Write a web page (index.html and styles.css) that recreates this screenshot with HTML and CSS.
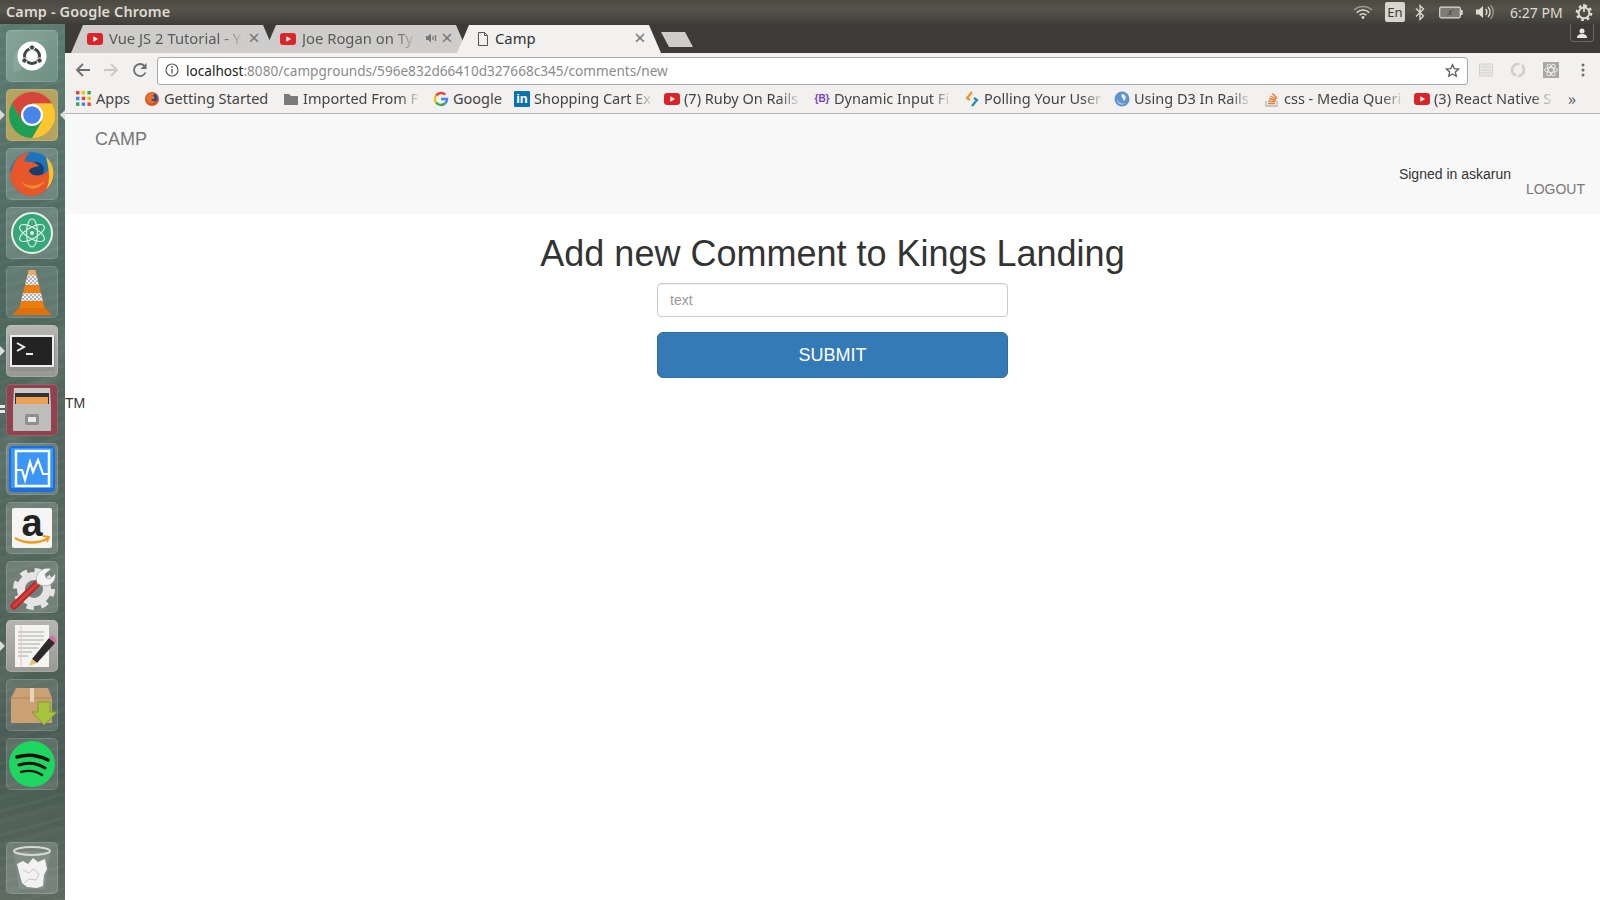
FILE: index.html
```html
<!DOCTYPE html>
<html lang="en">
<head>
<meta charset="utf-8">
<title>Camp</title>
<link rel="stylesheet" href="styles.css">
</head>
<body>
<svg class="defs" width="0" height="0" aria-hidden="true">
  <defs>
    <symbol id="yt" viewBox="0 0 16 16"><rect x="0" y="2" width="16" height="12" rx="3" fill="#d9252a"/><path d="M6.400 5.300 11 8l-4.600 2.700z" fill="#fff"/></symbol>
    <pattern id="check" width="4" height="4" patternUnits="userSpaceOnUse"><rect width="4" height="4" fill="#eeeeee"/><rect width="2" height="2" fill="#b4b4b4"/><rect x="2" y="2" width="2" height="2" fill="#b4b4b4"/></pattern>
  </defs>
</svg>
<header class="topbar">
  <div class="win-title">Camp - Google Chrome</div>
  <div class="status">
    <svg class="st-wifi" width="20" height="14" viewBox="0 0 20 14"><g fill="none" stroke="#dfdbd2" stroke-width="1.500"><path d="M1 5a13 13 0 0 1 18 0" opacity=".55"/><path d="M3.800 7.600a9 9 0 0 1 12.400 0"/><path d="M6.600 10.200a5 5 0 0 1 6.800 0"/></g><circle cx="10" cy="12.500" r="1.400" fill="#dfdbd2"/></svg>
    <div class="st-en">En</div>
    <svg class="st-bt" width="10" height="17" viewBox="0 0 10 17"><path d="M1 4.500 8.500 12 5 15.500v-14L8.500 5 1 12.500" fill="none" stroke="#dfdbd2" stroke-width="1.300"/></svg>
    <svg class="st-bat" width="24" height="13" viewBox="0 0 24 13"><rect x=".7" y="1.200" width="20.600" height="10.600" rx="1.500" fill="#7d7b74" stroke="#dfdbd2" stroke-width="1.200"/><rect x="21.600" y="4" width="2" height="5" fill="#dfdbd2"/><path d="M15 3 9.500 6.300l3 .6L7 10l6.500-2.400-3-.7z" fill="#2f2e2a"/></svg>
    <svg class="st-vol" width="20" height="16" viewBox="0 0 20 16"><path d="M1 5.500h3L8 2v12l-4-3.500H1z" fill="#dfdbd2"/><g fill="none" stroke="#dfdbd2" stroke-width="1.400"><path d="M10.500 5a4 4 0 0 1 0 6"/><path d="M13 3a7 7 0 0 1 0 10"/><path d="M15.500 1a10 10 0 0 1 0 14" opacity=".5"/></g></svg>
    <div class="st-time">6:27 PM</div>
    <svg class="st-gear" width="18" height="18" viewBox="0 0 20 20"><circle cx="10" cy="11" r="6" fill="none" stroke="#dfdbd2" stroke-width="2.200"/><circle cx="10" cy="11" r="8" fill="none" stroke="#dfdbd2" stroke-width="2.600" stroke-dasharray="3 3.300"/><rect x="9" y="1" width="2" height="9" fill="#dfdbd2"/></svg>
  </div>
</header>
<div class="shell">
  <nav class="launcher">
    <div class="tile tile-ubuntu"><svg viewBox="0 0 52 52"><path d="M8 42C2 24 18 6 40 10c-14 0-26 14-24 30z" fill="#fff" opacity=".1"/><circle cx="26" cy="26" r="14.500" fill="#fff"/><circle cx="26" cy="26" r="7.500" fill="none" stroke="#3f4a44" stroke-width="3"/><circle cx="26" cy="17.500" r="2.700" fill="#3f4a44" stroke="#fff"/><circle cx="18.500" cy="30.500" r="2.700" fill="#3f4a44" stroke="#fff"/><circle cx="33.500" cy="30.500" r="2.700" fill="#3f4a44" stroke="#fff"/></svg></div>
    <div class="tile tile-chrome pip pip-both"><svg viewBox="0 0 52 52"><path d="M45.900 14.500A23 23 0 0 0 6.100 14.500L16 31.800 26 14.500z" fill="#d8453c"/><path d="M45.900 14.500A23 23 0 0 1 26 49L36 31.800 26 14.500z" fill="#fbc62f"/><path d="M6.100 14.500A23 23 0 0 0 26 49L36 31.800H16z" fill="#1f9e55"/><circle cx="26" cy="26" r="11" fill="#fff"/><circle cx="26" cy="26" r="8.800" fill="#4a86e8"/></svg></div>
    <div class="tile"><svg viewBox="0 0 52 52"><circle cx="26" cy="26" r="22" fill="#1d74bd"/><circle cx="30" cy="22" r="8" fill="#17406f"/><path d="M6 22C8 10 16 5 24 5c-4 3-6 6-5 9 5-1 11 0 14 4-5 1-9 2-10 5 3 6 12 6 19 0 2-4 1-10-2-14 6 5 9 13 7 21-3 12-13 18-21 18C14 48 4 38 4 26c0-2 1-3 2-4z" fill="#e6572a"/><path d="M40 9c6 5 9 13 7 21-1 5-4 9-7 12 4-8 4-18 0-33z" fill="#f8c12e"/><path d="M15 33c6 6 15 6 24 0-5 9-18 11-24 0z" fill="#f08a2b"/></svg></div>
    <div class="tile"><svg viewBox="0 0 52 52"><circle cx="26" cy="26" r="20" fill="#35a877" stroke="#e9f1ec" stroke-width="2"/><g fill="none" stroke="#dff0e6" stroke-width="1.200"><ellipse cx="26" cy="26" rx="14" ry="5.500" transform="rotate(30 26 26)"/><ellipse cx="26" cy="26" rx="14" ry="5.500" transform="rotate(90 26 26)"/><ellipse cx="26" cy="26" rx="14" ry="5.500" transform="rotate(150 26 26)"/></g><circle cx="26" cy="26" r="2" fill="#e8f3ec"/></svg></div>
    <div class="tile tile-dim"><svg viewBox="0 0 52 52"><path d="M22.500 4h7l1 5h-9z" fill="#f3a868"/><path d="M21.500 9h9l2.500 10H19z" fill="url(#check)"/><path d="M19 19h14l2 8H17z" fill="#ee7d10"/><path d="M17 27h18l2 8H15z" fill="url(#check)"/><path d="M15 35h22l2 9H13z" fill="#ee7d10"/><path d="M13 42h26l7 7H6z" fill="#e2700a"/></svg></div>
    <div class="tile tile-light pip pip-left"><svg viewBox="0 0 52 52"><rect x="3" y="10" width="46" height="36" rx="2" fill="#8f8f8f"/><rect x="4" y="10" width="44" height="32" fill="#ededed"/><rect x="6" y="12" width="40" height="28" fill="#232323"/><path d="M11 18l7 4-7 4" fill="none" stroke="#eee" stroke-width="2"/><path d="M20 29h7" stroke="#eee" stroke-width="2"/></svg></div>
    <div class="tile tile-files pip pip-double"><svg viewBox="0 0 52 52"><path d="M8 4h36l1 20H7z" fill="#c9c9c9"/><rect x="9" y="9" width="34" height="13" fill="#333"/><rect x="10" y="13" width="32" height="7" fill="#ef9e52"/><path d="M7 20h38v27H7z" fill="#bdbdbb"/><rect x="19" y="30" width="14" height="11" rx="2" fill="#8f8f8d"/><rect x="22" y="33" width="8" height="5" fill="#e9e9e9"/></svg></div>
    <div class="tile"><svg viewBox="0 0 52 52"><rect x="3" y="3" width="46" height="46" rx="4" fill="#1c6fe0"/><rect x="5" y="5" width="42" height="40" fill="#3a96fb"/><rect x="10" y="8" width="33" height="35" fill="none" stroke="#fff" stroke-width="2.500"/><path d="M10 27h6l3 10 5-18 3 10 5-12 5 14h7" fill="none" stroke="#fff" stroke-width="2.200"/></svg></div>
    <div class="tile"><svg viewBox="0 0 52 52"><rect x="6" y="6" width="40" height="40" rx="2" fill="#f5f5f5"/><text class="amz" x="26" y="34" text-anchor="middle">a</text><path d="M9 36c10 6 24 6 33 0" fill="none" stroke="#f09a17" stroke-width="2.400"/><path d="M37 34l6 1-2 5" fill="none" stroke="#f09a17" stroke-width="1.800"/></svg></div>
    <div class="tile"><svg viewBox="0 0 52 52"><circle cx="28" cy="28" r="13" fill="none" stroke="#e4e4e4" stroke-width="8"/><circle cx="28" cy="28" r="18" fill="none" stroke="#e4e4e4" stroke-width="6" stroke-dasharray="7 7.140"/><path d="M8 45 34 20" stroke="#b92a28" stroke-width="7" stroke-linecap="round"/><path d="M8 45 34 20" stroke="#d6403a" stroke-width="3" stroke-linecap="round"/><path d="M31 22c-3-9 6-17 14-14l-6 5 1 4 4 1 5-5c2 9-9 16-18 9z" fill="#f4f4f4" stroke="#9a9a9a" stroke-width=".6"/></svg></div>
    <div class="tile tile-light pip pip-left"><svg viewBox="0 0 52 52"><rect x="9" y="5" width="34" height="42" fill="#f4f4f1"/><path d="M12 12h26M12 16h26M12 20h26M12 24h22M12 28h20M12 32h14M12 36h10" stroke="#a8a8a8" stroke-width="1"/><path d="M15 6v40" stroke="#e8c0c0"/><path d="M26 39l17-21 6 5-18 20z" fill="#2b2b2b"/><path d="M43 18l3-3 5 5-2 3z" fill="#d26fa0"/><path d="M26 39l-3 7 8-3z" fill="#e8c56a"/></svg></div>
    <div class="tile tile-dim"><svg viewBox="0 0 52 52"><path d="M10 9h32l4 10v25H5V19z" fill="#c9a173"/><path d="M5 19h41" stroke="#b08a5c"/><rect x="24" y="9" width="4" height="14" fill="#e6d3b8"/><path d="M32 23h12v10h7L38 46 26 33h6z" fill="#a7c43e" stroke="#7f9a2a"/></svg></div>
    <div class="tile tile-dim"><svg viewBox="0 0 52 52"><circle cx="26" cy="26" r="23" fill="#1ed760"/><g fill="none" stroke="#111" stroke-linecap="round"><path d="M11 19c10-3 21-2 31 3" stroke-width="3.600"/><path d="M13 27c9-3 18-2 26 3" stroke-width="3"/><path d="M15 34c7-2 15-1 21 3" stroke-width="2.400"/></g></svg></div>
    <div class="tile tile-trash"><svg viewBox="0 0 52 52"><path d="M8 9l5 38h26l5-38z" fill="#8c9a94" opacity=".55"/><ellipse cx="26" cy="9" rx="18" ry="4" fill="none" stroke="#d6d9d6" stroke-width="2"/><path d="M11 22l6-3 5 3 5-6 5 4 7-3 2 10-3 6-1 11-6 2-10-1-5-4-3-11z" fill="#f2f2f2"/><path d="M17 28l6 3 4-4 6 5-3 6-7-1-5 4" fill="none" stroke="#c8c8c8"/></svg></div>
  </nav>
  <div class="browser">
    <div class="tabstrip">
      <div class="tab">
        <svg class="fav" viewBox="0 0 16 16"><use href="#yt"/></svg>
        <span class="tab-title fade">Vue JS 2 Tutorial - Y</span>
        <span class="tab-x">×</span>
      </div>
      <div class="tab">
        <svg class="fav" viewBox="0 0 16 16"><use href="#yt"/></svg>
        <span class="tab-title fade">Joe Rogan on Ty</span>
        <svg class="tab-audio" width="12" height="12" viewBox="0 0 12 12"><path d="M1 4h2l3-2.500v9L3 8H1z" fill="#777"/><path d="M8 4v4M10.500 3v6" stroke="#777" stroke-width="1.300"/></svg>
        <span class="tab-x tab-x-near">×</span>
      </div>
      <div class="tab tab-active">
        <svg class="fav fav-doc" viewBox="0 0 16 16"><path d="M3.500 1.500h6l3 3v10h-9z M9.500 1.500v3h3" fill="none" stroke="#555" stroke-width="1"/></svg>
        <span class="tab-title">Camp</span>
        <span class="tab-x">×</span>
      </div>
      <div class="newtab"></div>
      <div class="profile"><svg width="12" height="10" viewBox="0 0 12 10"><circle cx="6" cy="3" r="2.500" fill="#e8e6e2"/><path d="M1 10c0-3 2-4 5-4s5 1 5 4z" fill="#e8e6e2"/></svg></div>
    </div>
    <div class="toolbar">
      <svg class="tb tb-back" width="16" height="16" viewBox="0 0 16 16"><path d="M15 8H2M8 2 2 8l6 6" fill="none" stroke="#6f6f6f" stroke-width="1.800"/></svg>
      <svg class="tb tb-fwd" width="16" height="16" viewBox="0 0 16 16"><path d="M1 8h13M8 2l6 6-6 6" fill="none" stroke="#c9c8c6" stroke-width="1.800"/></svg>
      <svg class="tb tb-reload" width="16" height="16" viewBox="0 0 16 16"><path d="M13.500 10.500A6 6 0 1 1 12.500 4" fill="none" stroke="#6f6f6f" stroke-width="1.800"/><path d="M14.500 1v6h-6z" fill="#6f6f6f"/></svg>
      <div class="omnibox">
        <svg class="info" width="14" height="14" viewBox="0 0 14 14"><circle cx="7" cy="7" r="6" fill="none" stroke="#5f5f5f" stroke-width="1.200"/><path d="M7 6v4.500" stroke="#5f5f5f" stroke-width="1.400"/><circle cx="7" cy="4" r=".9" fill="#5f5f5f"/></svg>
        <span class="url"><span class="url-host">localhost</span>:8080/campgrounds/596e832d66410d327668c345/comments/new</span>
        <svg class="star" width="15" height="15" viewBox="0 0 16 16"><path d="M8 1.800l1.900 4.300 4.600.4-3.500 3 1.100 4.600L8 11.700l-4.100 2.400L5 9.500l-3.500-3 4.600-.4z" fill="none" stroke="#5f5f5f" stroke-width="1.400"/></svg>
      </div>
      <div class="ext-icons">
        <svg width="14" height="14" viewBox="0 0 14 14"><rect x=".5" y="1" width="13" height="12" fill="#e9e8e6" stroke="#d4d3d1"/><path d="M2 4h10M2 7h10M2 10h10" stroke="#d4d3d1"/></svg>
        <svg width="16" height="16" viewBox="0 0 16 16"><circle cx="8" cy="8" r="6" fill="none" stroke="#cfcecc" stroke-width="2.500"/><path d="M10 1c2 4 0 9-4 14" stroke="#f2f1f0" stroke-width="2" fill="none"/></svg>
        <svg width="16" height="16" viewBox="0 0 16 16"><rect width="16" height="16" fill="#a9a8a6"/><g fill="none" stroke="#eee" stroke-width=".9"><ellipse cx="8" cy="8" rx="6.500" ry="2.500"/><ellipse cx="8" cy="8" rx="6.500" ry="2.500" transform="rotate(60 8 8)"/><ellipse cx="8" cy="8" rx="6.500" ry="2.500" transform="rotate(120 8 8)"/></g></svg>
        <svg class="menu" width="4" height="14" viewBox="0 0 4 14"><circle cx="2" cy="2" r="1.500" fill="#6f6f6f"/><circle cx="2" cy="7" r="1.500" fill="#6f6f6f"/><circle cx="2" cy="12" r="1.500" fill="#6f6f6f"/></svg>
      </div>
    </div>
    <div class="bookmarks">
      <div class="bm bm-apps"><svg class="bm-ic" viewBox="0 0 14 14"><g><rect x="0" y="0" width="3" height="3" fill="#ea4335"/><rect x="5" y="0" width="3" height="3" fill="#fbbc05"/><rect x="10" y="0" width="3" height="3" fill="#34a853"/><rect x="0" y="5" width="3" height="3" fill="#4285f4"/><rect x="5" y="5" width="3" height="3" fill="#ea4335"/><rect x="10" y="5" width="3" height="3" fill="#fbbc05"/><rect x="0" y="10" width="3" height="3" fill="#34a853"/><rect x="5" y="10" width="3" height="3" fill="#4285f4"/><rect x="10" y="10" width="3" height="3" fill="#ea4335"/></g></svg><span class="bm-t">Apps</span></div>
      <div class="bm bm-gs"><svg class="bm-ic" viewBox="0 0 16 16"><circle cx="8" cy="8" r="7" fill="#d9531e"/><circle cx="9" cy="7" r="4.500" fill="#24509a"/><path d="M3 5c2-3 6-4 9-3-2 1-3 2-3 3 2 1 2 3-1 3-2 1 1 3 4 2-2 3-6 3-8 1C2 9 2 7 3 5z" fill="#e8742a"/></svg><span class="bm-t">Getting Started</span></div>
      <div class="bm"><svg class="bm-ic" viewBox="0 0 16 16"><path d="M1 3h5l2 2h7v9H1z" fill="#7a7a7a"/></svg><span class="bm-t fade">Imported From F</span></div>
      <div class="bm bm-goog"><svg class="bm-ic" viewBox="0 0 16 16"><g fill="none" stroke-width="2.400"><path d="M12.300 3.700A6 6 0 0 0 3 4.700" stroke="#ea4335"/><path d="M3 4.700a6 6 0 0 0 0 6.600" stroke="#fbbc05"/><path d="M3 11.300a6 6 0 0 0 9.300.800" stroke="#34a853"/><path d="M12.300 12.100A6 6 0 0 0 14 8H8" stroke="#4285f4"/></g></svg><span class="bm-t">Google</span></div>
      <div class="bm"><div class="li-ic">in</div><span class="bm-t fade">Shopping Cart Ex</span></div>
      <div class="bm"><svg class="bm-ic" viewBox="0 0 16 16"><use href="#yt"/></svg><span class="bm-t fade">(7) Ruby On Rails</span></div>
      <div class="bm"><div class="b-ic">{B}</div><span class="bm-t fade">Dynamic Input Fi</span></div>
      <div class="bm"><svg class="bm-ic" viewBox="0 0 16 16"><path d="M8 1 3 7l3 2" fill="none" stroke="#f0932b" stroke-width="2.200"/><path d="M8 15l5-6-3-2" fill="none" stroke="#1f8fb5" stroke-width="2.200"/></svg><span class="bm-t fade">Polling Your User</span></div>
      <div class="bm"><svg class="bm-ic" viewBox="0 0 16 16"><circle cx="8" cy="8" r="7.500" fill="#5f93c9"/><path d="M8 3c4 0 5 5 2 7-1-3-4-5-2-7zM3 8c1 4 5 6 9 4-4 3-9 1-9-4z" fill="#e4eef7"/></svg><span class="bm-t fade">Using D3 In Rails</span></div>
      <div class="bm"><svg class="bm-ic" viewBox="0 0 16 16"><path d="M2 10v5h11v-5" fill="none" stroke="#b5b5b5" stroke-width="1.400"/><path d="M4 12.500h7M4.300 10l7 .6M5 7.500l6.800 1.800M6.300 5l6 3.300M8.500 2.500l4.500 4.700" stroke="#e8792b" stroke-width="1.300"/></svg><span class="bm-t fade">css - Media Queri</span></div>
      <div class="bm"><svg class="bm-ic" viewBox="0 0 16 16"><use href="#yt"/></svg><span class="bm-t fade">(3) React Native S</span></div>
      <div class="bm-more">»</div>
    </div>
    <div class="navbar">
      <a class="brand">CAMP</a>
      <div class="nav-right">
        <div class="signed">Signed in askarun</div>
        <a class="logout">LOGOUT</a>
      </div>
    </div>
    <main class="content">
      <h1 class="heading">Add new Comment to Kings Landing</h1>
      <form class="form">
        <input class="field" type="text" placeholder="text">
        <button class="submit" type="button">SUBMIT</button>
      </form>
      <div class="tm">TM</div>
    </main>
  </div>
</div>
</body>
</html>
```

FILE: styles.css
```css
* { box-sizing: border-box; }
html, body { margin: 0; height: 100%; overflow: hidden; }
body {
  width: 1600px;
  height: 900px;
  display: flex;
  flex-direction: column;
  background: #fff;
  font-family: "Noto Sans", "Open Sans", sans-serif;
}
.defs { position: absolute; }

/* Desktop panel */
.topbar {
  height: 24px;
  flex: none;
  display: flex;
  align-items: center;
  justify-content: space-between;
  padding-left: 6px;
  background: linear-gradient(#4b4a42, #55534a 40%, #3f3e39);
  color: #dfdbd2;
}
.win-title { font-size: 14.4px; font-weight: 600; letter-spacing: .15px; padding-bottom: 2px; }
.status { display: flex; align-items: center; height: 24px; }
.status > * { flex: none; }
.st-en {
  width: 20px; height: 20px; margin-left: 12px; border-radius: 2px;
  background: #d9d5cc; color: #3c3b37; font-size: 13px; line-height: 20px; text-align: center;
}
.st-bt { margin-left: 10px; }
.st-bat { margin-left: 14px; }
.st-vol { margin-left: 12px; }
.st-time { margin-left: 15px; font-size: 14px; width: 53px; white-space: nowrap; color: #dfdbd2; }
.st-gear { margin-left: 12px; margin-right: 7px; }

.shell { flex: 1; display: flex; min-height: 0; }

/* Launcher */
.launcher {
  width: 65px;
  flex: none;
  display: flex;
  flex-direction: column;
  align-items: center;
  gap: 7px;
  padding: 6px 1px 6px 0;
  background:
    linear-gradient(118deg, transparent 40%, rgba(255,255,255,.07) 44%, transparent 48%, transparent 62%, rgba(255,255,255,.05) 66%, transparent 70%),
    repeating-linear-gradient(165deg, rgba(255,255,255,.02) 0 3px, rgba(0,0,0,.03) 3px 9px, rgba(255,255,255,.012) 9px 14px, rgba(0,0,0,.02) 14px 23px),
    linear-gradient(#5f7d75, #4f6a60 30%, #56695f 60%, #4a5d55 85%, #5f6d63);
}
.tile {
  position: relative;
  width: 52px;
  height: 52px;
  flex: none;
  border-radius: 5px;
  background: rgba(255,255,255,.17);
  box-shadow: inset 0 0 0 1px rgba(255,255,255,.14);
}
.tile svg { display: block; width: 52px; height: 52px; }
.tile-ubuntu { background: linear-gradient(135deg, #88a699, #6d8f82); }
.tile-chrome { background: #b5a45f; }
.tile-files { background: #8d4450; }
.tile-light { background: linear-gradient(#b5b5b2, #989895); }
.tile-dim { background: rgba(255,255,255,.12); }
.tile-trash { margin-top: auto; }
.amz { font-family: "Liberation Sans", sans-serif; font-weight: 700; font-size: 38px; fill: #222; }
.pip::before, .pip-both::after {
  content: "";
  position: absolute;
  top: 21px;
  border-style: solid;
  border-color: transparent;
  border-width: 5px;
}
.pip::before { left: -6px; border-left-color: #d9dcd8; }
.pip-both::after { right: -7px; border-right-color: #d9dcd8; }
.pip-double::before { border: 0; left: -6px; top: 21px; width: 5px; height: 8px; background: linear-gradient(#e8eae7 3px, transparent 3px, transparent 5px, #e8eae7 5px); }

/* Browser */
.browser { flex: 1; min-width: 0; display: flex; flex-direction: column; }

.tabstrip {
  height: 29px;
  flex: none;
  display: flex;
  align-items: flex-end;
  padding-left: 6px;
  position: relative;
  background: #3c3b37;
}
.tab {
  width: 204px;
  height: 28px;
  flex: none;
  margin-right: -11px;
  padding: 0 14px 2px 16px;
  display: flex;
  align-items: center;
  background: #cfcdcb;
  clip-path: polygon(0 100%, 12px 0, calc(100% - 12px) 0, 100% 100%);
  font-size: 14.8px;
  color: #5a5a5a;
  position: relative;
}
.tab-active { background: #f2f1f0; color: #333; padding-left: 18px; z-index: 1; }
.fav { width: 16px; height: 16px; flex: none; margin-top: 2px; }
.tab-title { margin-left: 6px; white-space: nowrap; }
.tab-active .tab-title { margin-left: 4px; }
.fade {
  -webkit-mask-image: linear-gradient(to right, #000 calc(100% - 18px), rgba(0,0,0,.15));
  mask-image: linear-gradient(to right, #000 calc(100% - 18px), rgba(0,0,0,.15));
}
.tab-audio { margin-left: auto; flex: none; }
.tab-x { font-size: 20px; line-height: 1; color: #777; margin-left: auto; width: 14px; text-align: center; }
.tab-x-near { margin-left: 3px; }
.newtab {
  width: 32px;
  height: 15px;
  margin-left: 11px;
  margin-bottom: 6px;
  background: #cfcdcb;
  clip-path: polygon(0 0, 75% 0, 100% 100%, 25% 100%);
  flex: none;
}
.profile {
  position: absolute;
  right: 6px;
  top: 0;
  width: 24px;
  height: 18px;
  border: 1px solid #6a6963;
  border-top: 0;
  border-radius: 0 0 4px 4px;
  display: flex;
  align-items: center;
  justify-content: center;
}

.toolbar {
  height: 32px;
  flex: none;
  display: flex;
  align-items: flex-end;
  padding-left: 10px;
  background: #f2f1f0;
}
.tb { flex: none; margin-bottom: 7px; }
.tb-fwd { margin-left: 12px; }
.tb-reload { margin-left: 13px; }
.omnibox {
  width: 1311px;
  height: 28px;
  margin-left: 9px;
  flex: none;
  display: flex;
  align-items: center;
  padding: 0 0 2px 7px;
  background: #fff;
  border: 1px solid #aaa9a7;
  border-radius: 3px;
}
.info { flex: none; }
.url { margin-left: 7px; flex: 1; font-size: 13.6px; color: #8b8b8b; white-space: nowrap; }
.url-host { color: #222; }
.star { margin-right: 7px; flex: none; }
.ext-icons { display: flex; align-items: center; height: 26px; margin-bottom: 2px; margin-left: 11px; }
.ext-icons svg + svg { margin-left: 17px; }
.ext-icons .menu { margin-left: 22px; }

.bookmarks {
  height: 29px;
  flex: none;
  display: flex;
  align-items: center;
  padding-left: 11px;
  background: #f2f1f0;
  border-bottom: 1px solid #b5b3b1;
  font-size: 14.5px;
  color: #444;
}
.bm { width: 150px; flex: none; display: flex; align-items: center; white-space: nowrap; }
.bm-apps { width: 68px; }
.bm-gs { width: 139px; }
.bm-goog { width: 81px; }
.bm-ic { width: 16px; height: 16px; flex: none; }
.bm-t { margin-left: 4px; padding-bottom: 2px; }
.li-ic {
  width: 16px; height: 16px; flex: none; background: #0a72b1; color: #fff;
  font: 700 13px/16px "Liberation Sans", sans-serif; text-align: center; border-radius: 1px;
}
.b-ic { width: 16px; height: 16px; flex: none; text-align: center; color: #7a3fc8; font: 700 10px/16px "Liberation Sans", sans-serif; }
.bm-more { margin-left: 4px; font-size: 16px; color: #666; }

/* Page */
.navbar {
  height: 100px;
  flex: none;
  display: flex;
  justify-content: space-between;
  padding: 15px 15px 0 30px;
  background: #f8f8f8;
  font-family: "Liberation Sans", Arial, sans-serif;
}
.brand { font-size: 18px; line-height: 20px; height: 20px; color: #777; }
.nav-right { display: flex; flex-direction: column; align-items: flex-end; padding-top: 35px; font-size: 14px; line-height: 20px; }
.signed { color: #333; margin-right: 74px; height: 15px; }
.logout { color: #777; }

.content {
  flex: 1;
  position: relative;
  display: flex;
  flex-direction: column;
  align-items: center;
  font-family: "Liberation Sans", Arial, sans-serif;
  color: #333;
}
.heading { margin: 20px 0 9px; font-size: 36px; font-weight: 500; line-height: 40px; color: #333; }
.form { width: 351px; display: flex; flex-direction: column; gap: 15px; }
.field {
  height: 34px;
  padding: 6px 12px;
  font: 14px/20px "Liberation Sans", Arial, sans-serif;
  color: #555;
  background: #fff;
  border: 1px solid #ccc;
  border-radius: 4px;
  box-shadow: inset 0 1px 1px rgba(0,0,0,.075);
}
.field::placeholder { color: #999; opacity: 1; }
.submit {
  height: 46px;
  font: 18px/24px "Liberation Sans", Arial, sans-serif;
  color: #fff;
  background: #337ab7;
  border: 1px solid #2e6da4;
  border-radius: 6px;
}
.tm { position: absolute; left: 0; top: 179px; font-size: 14px; line-height: 20px; color: #333; }
```
